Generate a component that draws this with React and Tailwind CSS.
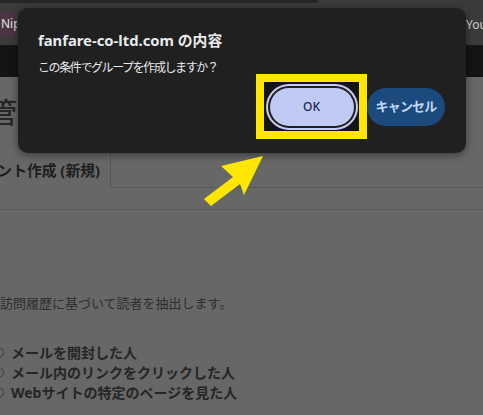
import React from 'react';

const jp = { fontFamily: '"Noto Sans", "Noto Sans CJK JP", sans-serif' };

const ConfirmDialog = () => (
  <div className="absolute left-[18px] top-[8px] w-[448px] h-[145px] rounded-[10px] bg-[#202020] shadow-[0_2px_8px_rgba(0,0,0,0.45)] flex flex-col">
    <h2 className="pl-[20px] pt-[22px] text-[14.8px] leading-[20px] font-bold text-[#e8eaed]">
      fanfare-co-ltd.com の内容
    </h2>
    <p className="pl-[20px] mt-[10px] text-[12px] leading-[16px] tracking-[-1.4px] text-[#e8eaed]">
      この条件でグループを作成しますか？
    </p>
    {/* buttons, OK is boxed in yellow */}
    <div className="flex items-center justify-end pr-[21px] mt-[-2px]">
      <div className="w-[111px] h-[65px] border-[8px] border-[#ffe600] bg-[#141414] flex items-center justify-center">
        <button className="w-[92px] h-[46px] rounded-full border-2 border-[#c5cdf0] bg-[#202020] p-[2px]">
          <span className="flex h-full w-full items-center justify-center rounded-full bg-[#c0cbf5] text-[12px] font-medium text-[#1c2456]">
            OK
          </span>
        </button>
      </div>
      <button className="w-[78px] h-[38px] rounded-full bg-[#1c4a7c] text-[13px] font-bold tracking-[-0.8px] text-[#c1d8fb]">
        キャンセル
      </button>
    </div>
  </div>
);

const Arrow = () => (
  <svg className="absolute left-0 top-0" width="483" height="415">
    <polygon
      points="263,156 221,166 233,177 204,199 211,206 240,184 244,195"
      fill="#ffe600"
    />
  </svg>
);

const App = () => {
  const options = ['メールを開封した人', 'メール内のリンクをクリックした人', 'Webサイトの特定のページを見た人'];

  return (
    <div className="relative w-[483px] h-[415px] overflow-hidden bg-[#676767]" style={jp}>
      {/* browser chrome */}
      <div className="h-[45px] bg-[#3b3b3b] relative">
        <div className="h-[3px] w-[318px] bg-[#262626] rounded-br-[6px]" />
        <div className="absolute left-0 top-[12px] h-[24px] w-[17px] overflow-hidden bg-[#4d3442] rounded-r-[4px] flex items-center">
          <span className="text-[12px] text-[#e0e0e0] pl-[1px] whitespace-nowrap">Nip</span>
        </div>
        <span className="absolute left-[466px] top-[16px] text-[12px] text-[#d0d0d0]">You</span>
      </div>
      <div className="h-[32px] bg-[#141414]" />

      {/* page behind the dialog */}
      <div className="text-[#262626]">
        <div className="h-[32px] mt-[19px] text-[28px] leading-[32px] ml-[-11px] font-medium text-[#262626] whitespace-nowrap">管理</div>
        <div className="flex h-[36px] mt-[24px]">
          <div className="w-[111px] border-r border-[#555] flex items-center justify-end pr-[10px] overflow-hidden">
            <span className="text-[14.8px] font-bold whitespace-nowrap text-[#1e1e1e]">ント作成 (新規)</span>
          </div>
          <div className="flex-1 border-b border-[#595959]" />
        </div>
        <div className="h-[22px] border-b border-[#595959]" />
        <p className="mt-[84px] text-[13px] leading-[18px] text-[#2e2e2e] whitespace-nowrap">
          訪問履歴に基づいて読者を抽出します。
        </p>
        <ul className="mt-[30px] flex flex-col">
          {options.map((o) => (
            <li key={o} className="flex items-center h-[20px] ml-[-7px] gap-[7px]">
              <span className="w-[11px] h-[11px] rounded-full border border-[#3a3a3a]" />
              <span className="text-[14px] font-bold text-[#252525] whitespace-nowrap">{o}</span>
            </li>
          ))}
        </ul>
      </div>

      <ConfirmDialog />
      <Arrow />
    </div>
  );
};

export default App;
